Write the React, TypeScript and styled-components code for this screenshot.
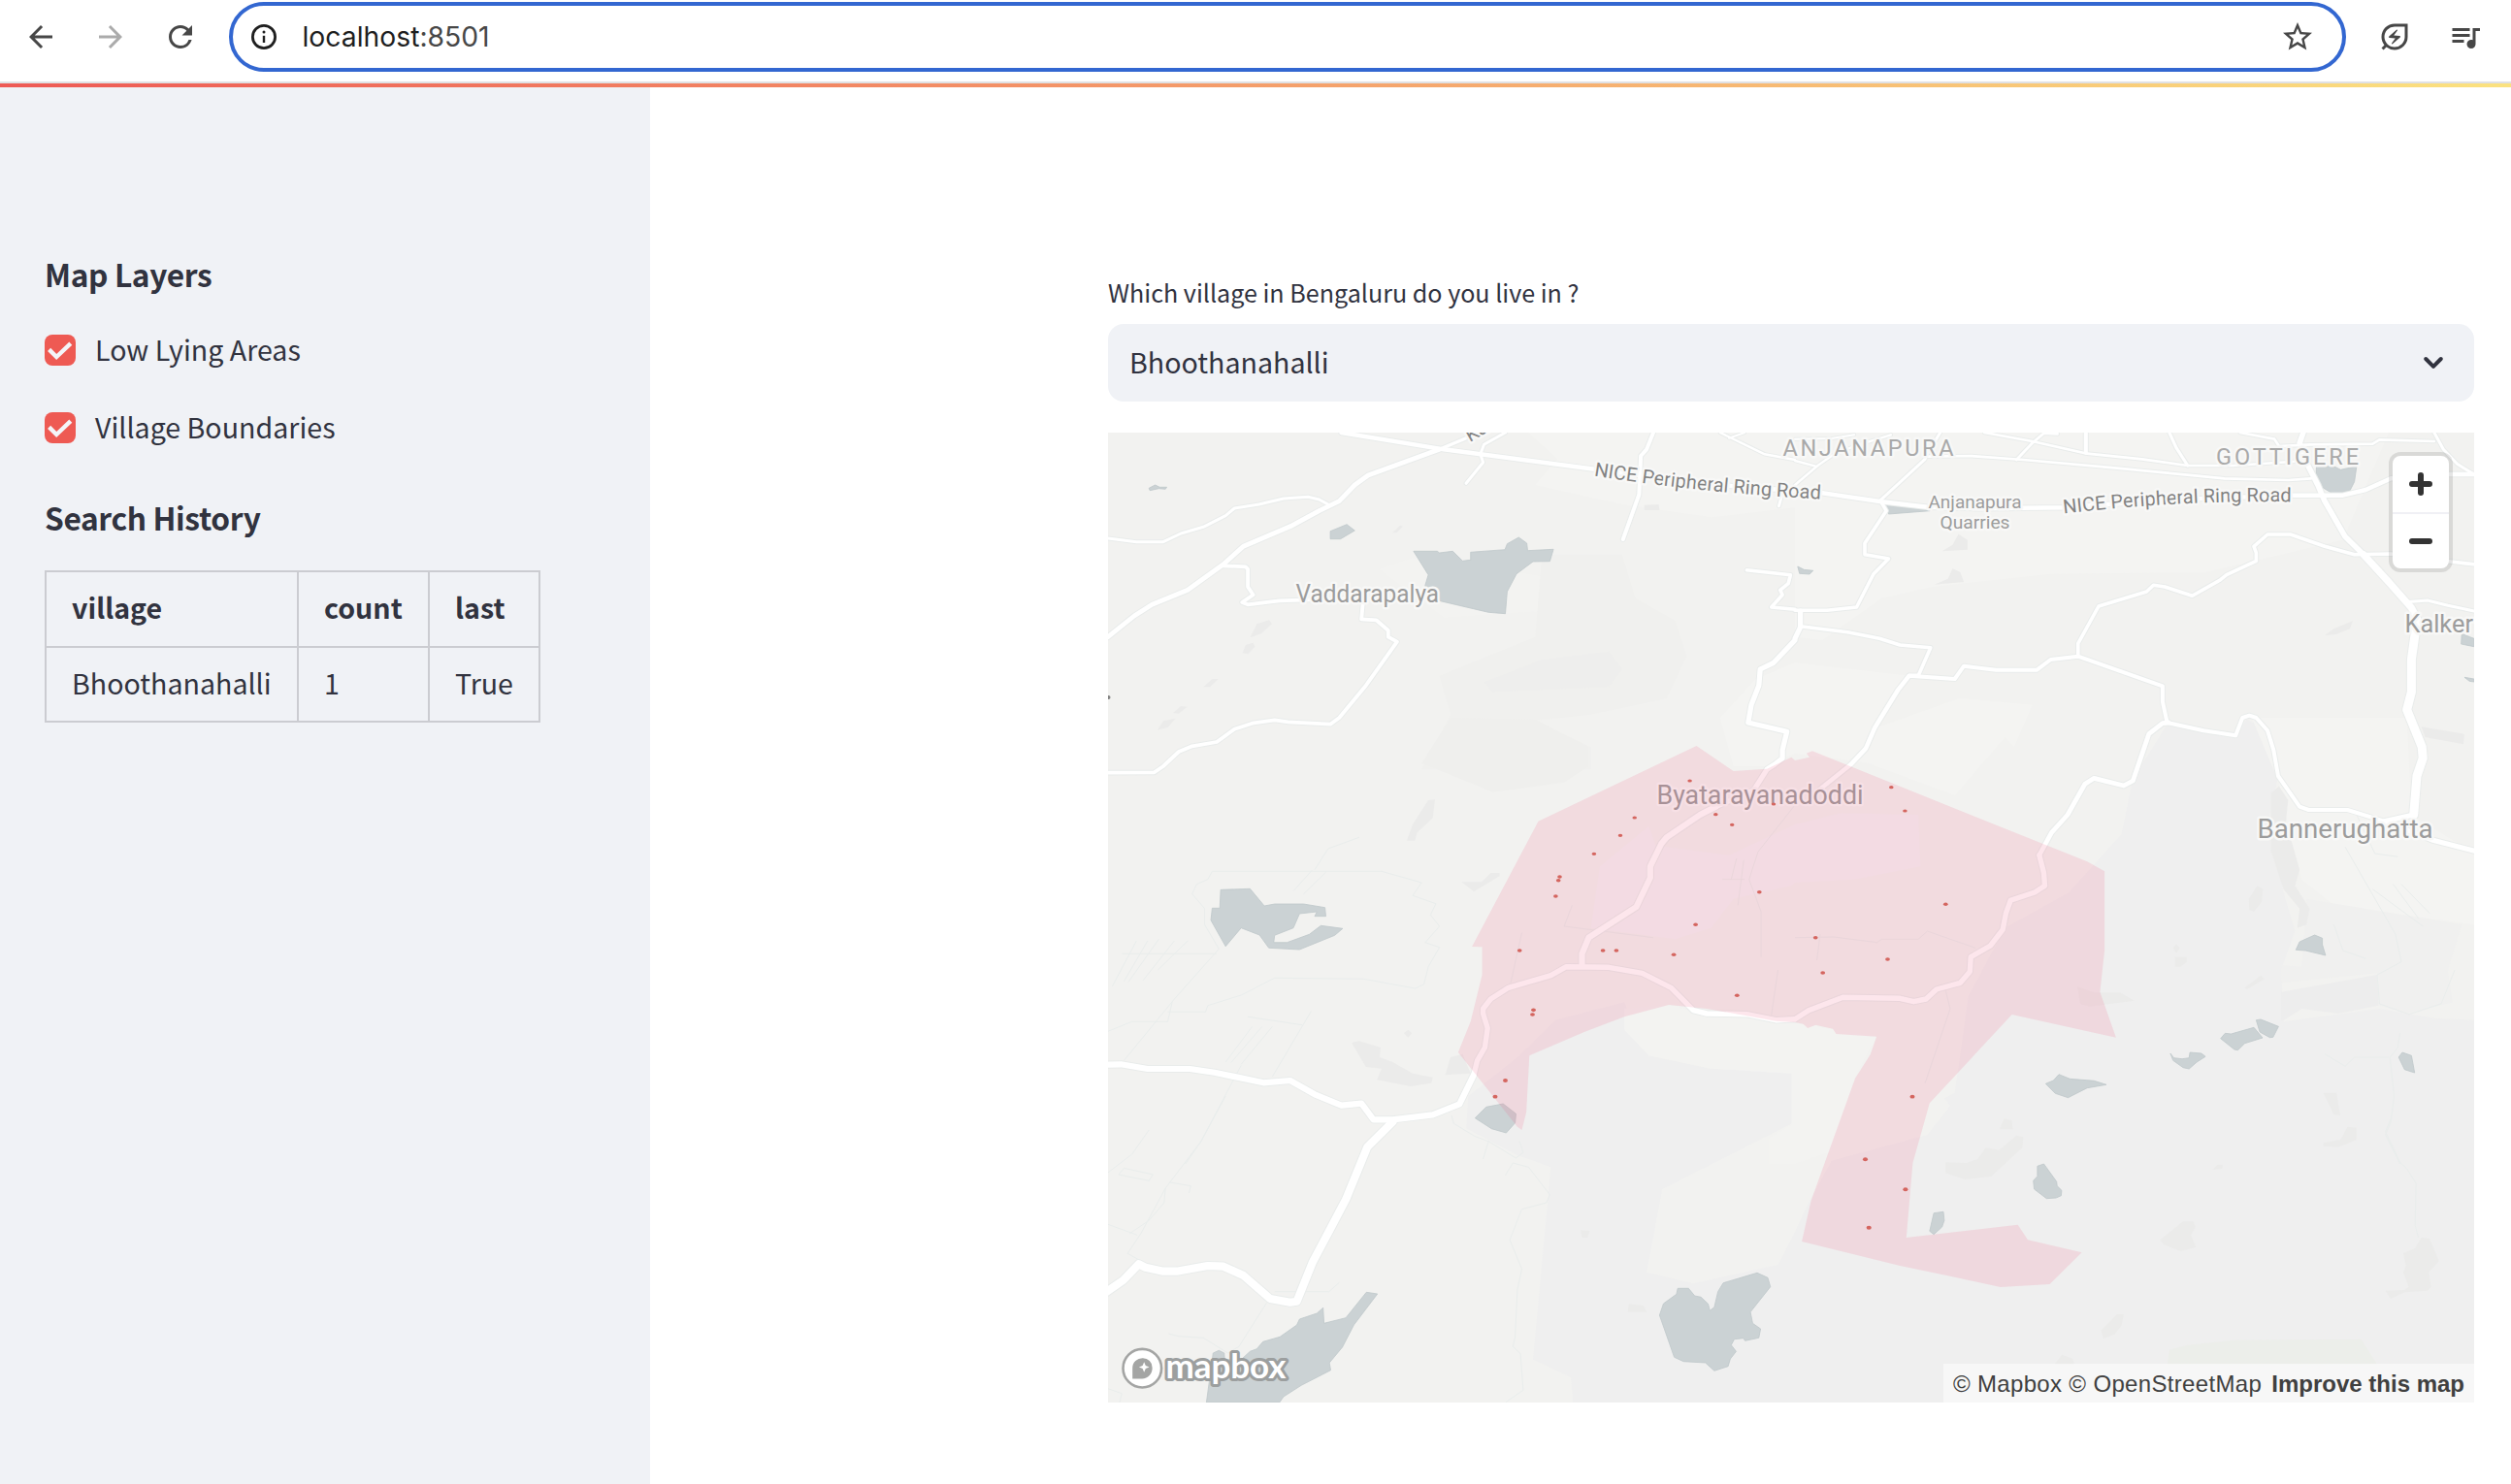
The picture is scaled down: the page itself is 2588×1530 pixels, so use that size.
import React from 'react';
import styled, { createGlobalStyle } from 'styled-components';
import {
  MdArrowBack,
  MdArrowForward,
  MdRefresh,
  MdStarBorder,
  MdOutlineEnergySavingsLeaf,
  MdQueueMusic,
} from 'react-icons/md';

const GlobalStyle = createGlobalStyle`
  *, *::before, *::after { box-sizing: border-box; }
  body {
    margin: 0;
    background: #ffffff;
    color: #31333f;
    font-family: "Noto Sans CJK SC", "Noto Sans", sans-serif;
  }
`;

/* ---------- page shell ---------- */

const Page = styled.div`
  display: flex;
  flex-direction: column;
  width: 2588px;
  height: 1530px;
  overflow: hidden;
`;

const Toolbar = styled.header`
  display: flex;
  align-items: flex-start;
  flex: none;
  height: 86px;
  padding: 2px 0 0 24px;
  border-bottom: 2px solid #e0e1e4;
`;

const NavButton = styled.button<{ $gap?: number; $muted?: boolean }>`
  display: flex;
  align-items: center;
  justify-content: center;
  flex: none;
  width: 36px;
  height: 72px;
  margin: 0 ${(p) => p.$gap ?? 0}px 0 0;
  padding: 0;
  border: 0;
  background: none;
  color: ${(p) => (p.$muted ? '#ababab' : '#474747')};
`;

const AddressBar = styled.div`
  display: flex;
  align-items: center;
  width: 2182px;
  height: 72px;
  margin-right: 32px;
  padding: 0 28px 0 19px;
  border: 4px solid #3367d1;
  border-radius: 36px;
`;

const Address = styled.div`
  flex: 1;
  margin-left: 26.5px;
  color: #1f1f1f;
  font: 400 28.3px/64px Inter, sans-serif;
`;

const Port = styled.span`
  color: #474747;
`;

const Decoration = styled.div`
  flex: none;
  height: 4px;
  background: linear-gradient(90deg, #ee5a55, #fbe280);
`;

const Body = styled.div`
  display: flex;
  flex: 1;
`;

/* ---------- sidebar ---------- */

const Sidebar = styled.aside`
  flex: none;
  width: 670px;
  padding: 170px 46px 0;
  background: #f0f2f6;
`;

const Heading = styled.h3`
  margin: 0;
  font-size: 31.7px;
  font-weight: 700;
  line-height: 44px;
  letter-spacing: -0.37px;
`;

const Options = styled.div`
  display: flex;
  flex-direction: column;
  gap: 48px;
  padding: 41px 0 54px;
`;

const Option = styled.label`
  display: flex;
  align-items: center;
  gap: 20px;
  height: 32px;
  font-size: 28.6px;
`;

const OptionText = styled.span`
  line-height: 32px;
  margin-top: -3px;
`;

const Tick = styled.span`
  display: flex;
  align-items: center;
  justify-content: center;
  width: 32px;
  height: 32px;
  border-radius: 8px;
  background: #ee5a53;
`;

const HistoryTable = styled.table`
  margin-top: 33px;
  border-collapse: collapse;
  font-size: 28.6px;
  line-height: 48px;
  text-align: left;
`;

const Cell = styled.td<{ $width: number }>`
  width: ${(p) => p.$width}px;
  height: 77.5px;
  padding: 0 0 3px 26px;
  border: 2px solid #cbccd1;
`;

/* ---------- main column ---------- */

const Main = styled.main`
  width: 1408px;
  margin-left: 472px;
  padding-top: 192px;
`;

const FieldLabel = styled.div`
  height: 52px;
  font-size: 25.1px;
  line-height: 38px;
`;

const Select = styled.div`
  display: flex;
  align-items: center;
  justify-content: space-between;
  height: 80px;
  padding: 0 30px 0 22px;
  border-radius: 16px;
  background: #f0f2f6;
  font-size: 28.6px;
`;

const SelectValue = styled.span`
  line-height: 48px;
  margin-top: -3px;
`;

const MapFrame = styled.div`
  position: relative;
  height: 1000px;
  margin-top: 32px;
  overflow: hidden;
  background: #f2f2f0;
`;

const ZoomControl = styled.div`
  position: absolute;
  top: 20px;
  right: 22px;
  width: 66px;
  border: 4px solid rgba(0, 0, 0, 0.1);
  border-radius: 12px;
  background: #ffffff;
  background-clip: padding-box;
`;

const ZoomButton = styled.button`
  display: flex;
  align-items: center;
  justify-content: center;
  width: 58px;
  height: 58px;
  padding: 0;
  border: 0;
  background: none;

  & + & {
    border-top: 2px solid #f0f0f5;
  }
`;

const Attribution = styled.div`
  position: absolute;
  right: 0;
  bottom: 0;
  display: flex;
  justify-content: space-between;
  width: 547px;
  height: 40px;
  padding: 1px 10px 0;
  background: rgba(255, 255, 255, 0.5);
  color: #404040;
  font: 24px/40px "Liberation Sans", Arial, sans-serif;
  white-space: nowrap;
`;

const Credits = styled.span`
  letter-spacing: 0.33px;
`;

/* ---------- map geometry ---------- */

/* Shapes are stored per tile; each tile has its own origin and unit size. */
type TileId = 'A' | 'B' | 'C' | 'D' | 'E' | 'F';
type Segment = [TileId, string];

const WEST = 0.45918;
const EAST = 0.47066;
const tiles: Record<TileId, { x: number; y: number; sx: number }> = {
  A: { x: -12, y: -176, sx: WEST },
  B: { x: 708, y: -176, sx: EAST },
  C: { x: -12, y: 294, sx: WEST },
  D: { x: 708, y: 294, sx: EAST },
  E: { x: -12, y: 684, sx: WEST },
  F: { x: 708, y: 684, sx: EAST },
};

const place = (segments: Segment[]) =>
  segments
    .map(([id, list]) => {
      const tile = tiles[id];
      return list
        .split(' ')
        .map((pair) => {
          const [x, y] = pair.split(',').map(Number);
          return `${(tile.x + x * tile.sx).toFixed(1)},${(tile.y + y / 3).toFixed(1)}`;
        })
        .join(' ');
    })
    .join(' ');

const terrain: { fill: string; shape: Segment[] }[] = [
  { fill: '#f4f4f2', shape: [['B', '0,528 1300,528 1200,860 900,960 560,965 300,1005 190,1040 60,1170 0,1160 0,960']] },
  { fill: '#f4f4f2', shape: [['A', '970,528 1568,528 1568,760 1380,790 1180,750 985,690 1035,610']] },
  { fill: '#f3f3f1', shape: [['A', '635,950 710,915 990,970 1030,1000 1000,1080 780,1100']] },
  { fill: '#f0f0ee', shape: [['A', '1000,905 1180,905 1210,1040 1300,1110 1325,1220 1280,1350 1110,1400 980,1420 1110,1500 1110,1570 730,1570 795,1400 770,1280 985,1160']] },
  { fill: '#efefed', shape: [['C', '795,0 985,5 1105,90 1105,150 1050,200 890,230 730,140']] },
  { fill: '#eeeeed', shape: [['A', '870,1300 1000,1230 1150,1205 1180,1260 1150,1315 890,1330']] },
  { fill: '#f4f4f2', shape: [['A', '1480,1290 1568,1240'], ['B', '250,1280 180,1440 360,1350 520,1370 480,1500'], ['D', '460,60 350,240 160,140 0,110'], ['C', '1500,150 1430,150 1400,0']] },
  { fill: '#efefef', shape: [['D', '815,20 960,50 990,5 1035,40 1058,180 1040,300 1070,540 1095,660 1065,780 1070,940 1280,900 1400,930 1487,935'], ['F', '1487,948 0,948'], ['E', '1568,948 1070,948 1065,870 980,815 1020,220 940,180 830,100 835,0'], ['C', '950,1045 1030,935 1185,880 1240,1045 1380,1085 1568,1100'], ['D', '0,1380 100,1340 350,1160 380,860 460,650 600,540 715,360 740,190']] },
  { fill: '#f2f2f0', shape: [['E', '1568,80 1270,288 1235,545 1340,580 1530,522 1568,420'], ['F', '0,420 30,330 80,200 290,120 340,30 290,-60 130,-60']] },
  { fill: '#f3f3f1', shape: [['C', '1185,900 1290,888 1340,910 1568,940'], ['D', '0,945 178,985 130,1115 80,1340 0,1380'], ['C', '1568,1380 1510,1380 1510,1300 1560,1260 1560,1100 1380,1085 1240,1045 1185,965']] },
  { fill: '#f4f3f5', shape: [['C', '1130,460 1240,335 1255,395 1420,425 1568,330'], ['D', '100,295 270,300 275,460 130,500 0,510'], ['C', '1560,520 1430,560 1380,650 1300,685 1110,650']] },
  { fill: '#f4f4f2', shape: [['D', '1000,0 1340,0 1350,300 1487,420 1487,640 1180,580 1110,500 1090,400 1060,200']] },
  { fill: '#ededed', shape: [['D', '1065,848 1275,795 1278,890 1190,915 1110,900 1065,940']] },
  { fill: '#f0f0ef', shape: [['D', '1120,560 1460,640 1430,780 1440,880 1340,915 1280,890 1275,790 1065,820 1065,765 1110,770']] },
  { fill: '#eceeea', shape: [['F', '815,830 820,785 860,770 960,755 1240,752 1275,830']] },
];

const patches: Segment[][] = [
  [['A', '345,1162 360,1120 388,1108 394,1120 370,1150']],
  [['A', '328,1210 335,1185 352,1178 356,1190 340,1213']],
  [['A', '240,1315 260,1290 274,1290 255,1315']],
  [['A', '172,1395 190,1374 204,1376 185,1397']],
  [['A', '137,1448 150,1420 178,1412 160,1440']],
  [['A', '664,838 682,815 688,818 674,838']],
  [['A', '1230,752 1262,750 1264,768 1230,768']],
  [['B', '322,895 345,875 358,842 378,860 378,890']],
  [['B', '305,998 335,980 345,948 362,960 370,990']],
  [['B', '1160,1155 1180,1135 1222,1110 1215,1135 1185,1152']],
  [['B', '1372,1438 1466,1460 1464,1492 1380,1470']],
  [['C', '697,380 710,330 745,255 760,253 755,310 720,355 715,380']],
  [['C', '820,508 865,508 885,480 905,480 905,490 847,538']],
  [['C', '573,1005 590,1000 638,1020 636,1050 665,1065 710,1100 755,1112 752,1130 705,1140 630,1120 640,1085 605,1080']],
  [['C', '690,975 700,965 708,975 700,990']],
  [['C', '783,1105 795,1050 822,1040 840,1100']],
  [['D', '1042,235 1060,212 1080,255 1075,320 1105,470 1095,520 1127,590 1120,640 1100,650 1105,590 1070,530 1042,410']],
  [['D', '994,560 1012,520 1025,530 1022,570 1005,600 995,595']],
  [['D', '828,712 835,700 843,712 835,728']],
  [['D', '832,740 858,740 858,755 845,770 832,770']],
  [['D', '985,835 1020,797 1028,808 990,840']],
  [['D', '618,832 655,850 712,850 743,875 645,893 625,885']],
  [['D', '1157,1160 1186,1160 1194,1230 1180,1228']],
  [['D', '448,1273 458,1240 475,1245 477,1273']],
  [['D', '1157,1315 1195,1305 1210,1265 1230,1268 1230,1305 1190,1328 1157,1325']],
  [['F', '330,205 375,207 400,195 418,160 447,167 485,122 500,127 498,160 430,248 372,258 330,238']],
  [['F', '800,445 850,388 872,388 877,405 867,430 878,467 845,480 808,460']],
  [['F', '915,228 925,212 937,212 935,225']],
  [['F', '1332,487 1358,470 1372,437 1390,442 1410,510 1388,545 1393,590 1385,602 1335,607 1305,627 1293,602 1335,600 1344,590 1332,545 1338,525']],
  [['F', '670,725 705,675 720,675 715,710 700,737 676,750']],
  [['F', '568,830 585,800 608,812 612,830']],
  [['E', '1195,643 1228,648 1235,668 1193,668']],
  [['E', '1087,415 1107,417 1102,438 1090,438']],
];

const lanes: Segment[][] = [
  [['C', '215,545 225,515 250,500 260,475 640,475 730,510 710,550 762,575 750,610 770,645 738,695 770,710 745,770 735,825 715,837 600,808 400,805 325,858 250,890 245,910 160,910']],
  [['C', '215,545 243,590 243,640 275,715 175,870 62,1060']],
  [['C', '57,730 270,730']],
  [['C', '90,690 36,830']],
  [['C', '115,690 62,815']],
  [['C', '140,685 72,817']],
  [['C', '175,690 105,812']],
  [['C', '205,690 138,780']],
  [['C', '350,955 290,1065']],
  [['C', '372,955 302,1067']],
  [['C', '395,955 325,1072']],
  [['C', '482,908 395,1110']],
  [['C', '340,925 462,950']],
  [['C', '484,472 443,535']],
  [['C', '515,478 465,545']],
  [['C', '26,970 80,940 160,940 170,880']],
  [['C', '590,370 520,405 490,470']],
  [['C', '325,1075 235,1310 200,1380']],
  [['C', '955,665 930,820']],
  [['C', '1568,270 1485,415 1465,500 1492,600 1492,740']],
  [['C', '1530,780 1515,920']],
  [['C', '1068,580 1050,645 1250,680']],
  [['C', '1405,500 1455,500']],
  [['C', '1437,435 1425,500']],
  [['C', '1453,440 1440,580']],
  [['D', '330,845 340,900 285,1130']],
  [['D', '0,680 85,678 180,695 190,685 270,685 290,660 395,712']],
  [['D', '55,670 48,750']],
  [['D', '1205,400 1315,670 1328,755 1275,795 1280,885 1345,917 1415,885 1445,780']],
  [['D', '1310,515 1365,620']],
  [['D', '1328,515 1390,605']],
  [['D', '1265,530 1375,645']],
  [['D', '1180,640 1200,720 1250,745']],
  [['D', '1230,300 1270,420 1320,430']],
  [['D', '1325,975 1320,1020 1303,1050 1312,1170 1305,1250 1293,1290 1325,1380']],
  [['F', '1305,70 1293,110 1325,205 1340,225 1360,270 1358,400 1365,437']],
  [['D', '1160,1040 1205,1078 1225,1050 1300,1050']],
  [['E', '290,0 235,140 155,285 100,425 70,487 100,510']],
  [['E', '118,105 80,180 26,237']],
  [['E', '155,285 152,330 118,385 75,425']],
  [['E', '26,397 92,430']],
  [['E', '50,243 62,223 127,243 118,262 50,243']],
  [['E', '165,267 212,278 208,300']],
  [['E', '545,577 522,605 400,605']],
  [['E', '382,640 320,775 295,795 240,748 185,743 162,735']],
  [['E', '797,60 802,85 850,125 880,140 942,192 958,175 950,140']],
  [['E', '880,140 868,195']],
  [['E', '918,245 935,207 970,220 1018,305 1010,330 955,350 928,445 955,535 945,600 940,745 935,775 952,797 958,910 918,948']],
  [['E', '26,905 57,920 52,948']],
];

const roads: { width: number; line: Segment[] }[] = [
  { width: 2.4, line: [['A', '1400,528 1500,595 1568,612'], ['B', '0,615 45,632']] },
  { width: 2, line: [['A', '1420,545 1455,528']] },
  { width: 2.4, line: [['B', '0,690 50,630 80,600 130,570 210,535']] },
  { width: 2, line: [['B', '0,548 80,546 130,535']] },
  { width: 3, line: [['B', '185,740 285,610 287,600 318,528']] },
  { width: 2.7, line: [['B', '287,602 385,600 500,612 700,637 940,670 1080,675 1130,670']] },
  { width: 2.7, line: [['B', '415,528 520,555 640,593 760,610 860,630 960,630 1120,615']] },
  { width: 2.8, line: [['B', '485,612 520,560 545,530 575,532']] },
  { width: 4, line: [['B', '637,528 637,590']] },
  { width: 3.2, line: [['B', '820,528 835,575 860,630']] },
  { width: 2.7, line: [['B', '975,528 1050,548 1060,570 1130,565 1265,563 1280,550 1400,555']] },
  { width: 3, line: [['B', '1400,528 1420,580 1450,625 1487,657']] },
  { width: 3, line: [['A', '918,528 870,565 862,595 868,620 830,685']] },
  { width: 3.4, line: [['A', '830,545 770,580']] },
  { width: 4, line: [['A', '1250,528 1235,580 1222,600 1218,720 1182,858']] },
  { width: 3, line: [['A', '1540,715 1532,755']] },
  { width: 3, line: [['A', '26,855 90,866 150,866 190,840 240,820 290,785 310,762 365,750 420,732 475,727 500,735 520,750']] },
  { width: 3.8, line: [['A', '285,940 335,943 340,950 340,1005 352,1030 327,1053 340,1060 410,1048 598,1040 598,1060 595,1105 628,1108 655,1140 655,1160 675,1175 605,1310 545,1410 525,1430 430,1423 400,1417 350,1427 310,1445 270,1485 215,1498 185,1515 150,1560'], ['C', '130,169 26,170']] },
  { width: 4.8, line: [['A', '770,580 610,660 580,690 545,740 500,770 440,815 330,880 285,935 205,1015 125,1060 85,1095 26,1160']] },
  { width: 4.4, line: [['A', '550,528 780,580 1110,640 1350,685'], ['B', '60,715 190,742 290,758 400,763 590,760 830,735 1090,722 1200,722 1250,705 1305,670 1400,657 1487,657']] },
  { width: 3.6, line: [['A', '1460,953 1558,968 1553,995 1535,1015 1540,1030 1515,1068 1568,1075'], ['B', '0,1078 70,1078 135,1068 172,965 205,918 153,905 153,870 200,770 190,745']] },
  { width: 5.2, line: [['B', '12,1080 12,1130 0,1165'], ['A', '1568,1170 1520,1240 1490,1260 1487,1310 1470,1370 1463,1425 1550,1453 1540,1510 1540,1535 1522,1555'], ['C', '1505,160 1475,225 1390,275']] },
  { width: 6.2, line: [['C', '1390,275 1355,300 1280,370 1268,390 1243,460 1243,495 1212,585 1105,680 1090,730 1090,768']] },
  { width: 3.6, line: [['B', '12,1127 115,1145 185,1165 230,1185 297,1193 270,1280']] },
  { width: 3.6, line: [['B', '620,1215 620,1180 665,1065 770,1020 785,1000 810,1005 870,1033 930,985 945,968 1010,925 1010,900 1005,880 1035,843 1085,843 1160,880 1225,905 1305,903 1440,928 1487,935']] },
  { width: 4, line: [['B', '250,1280 350,1290 370,1250 440,1262 530,1262 560,1230 620,1220 805,1312 805,1360 815,1425 895,1450 965,1465 980,1410 995,1403 1010,1410 1035,1450 1048,1510'], ['D', '1058,180 1105,275 1125,285 1210,285 1290,320']] },
  { width: 4.6, line: [['B', '270,1280 250,1280 225,1325 175,1440 155,1505 122,1555'], ['D', '60,215 40,240']] },
  { width: 3, line: [['B', '1335,1052 1385,1047 1430,1063 1487,1080']] },
  { width: 4.8, line: [['D', '818,15 805,17 775,50 740,195 720,210 655,187 635,205 597,300 562,355 535,425']] },
  { width: 5.4, line: [['D', '535,425 545,480 547,520 525,540 472,565 462,605 455,655 428,705 385,740 383,785 362,820 310,840 287,870 260,878 230,868 105,865 30,905 0,932']] },
  { width: 5.4, line: [['D', '0,932'], ['C', '1525,935 1460,917 1370,915 1340,905 1290,835 1225,790 1150,772 1055,770 1020,797 925,835 885,870 868,900 868,915 878,960 872,1020 855,1060 847,1105']] },
  { width: 6.2, line: [['C', '847,1105 815,1195 755,1228 665,1243 622,1243 595,1193 550,1199 490,1165 435,1122 375,1129 265,1097 210,1086 115,1086 55,1072 20,1073']] },
  { width: 5.6, line: [['B', '1115,520 1105,560 1120,620 1145,690 1160,740 1205,850 1245,905']] },
  { width: 7.2, line: [['B', '1245,905 1300,990 1350,1070 1365,1110']] },
  { width: 9, line: [['B', '1362,1110 1350,1230 1350,1330 1340,1385'], ['D', '1373,90 1375,125 1362,180 1355,300']] },
  { width: 5, line: [['D', '1355,300 1290,320 1395,378 1492,413']] },
  { width: 8.2, line: [['E', '665,80 608,158 560,320 485,515 450,635 435,638 390,627 330,555 285,527 250,525 180,542 150,542 110,530 95,520 60,570 20,608']] },
];

const lakes: Segment[][] = [
  [['A', '118,700 132,690 142,697 158,697 155,703 140,701 120,707']],
  [['A', '525,833 562,812 580,831 548,857 525,857']],
  [['A', '712,895 765,895 770,900 800,895 822,925 840,922 840,898 917,890 922,872 948,852 966,870 968,893 1026,889 1018,926 980,927 943,965 922,1020 918,1088 880,1084 738,1038 738,1000 745,968']],
  [['B', '190,745 298,765 295,770 205,780 202,765']],
  [['B', '6,942 20,952 40,955 32,966 10,964']],
  [['B', '1142,632 1180,632 1195,643 1230,632 1225,680 1212,717 1178,717 1140,685']],
  [['B', '1460,1150 1478,1160 1487,1165 1487,1190 1459,1182']],
  [['B', '1466,1285 1487,1290 1487,1299 1477,1297']],
  [['C', '279,532 345,529 377,582 400,576 465,576 513,587 515,614 490,614 495,600 456,606 442,650 400,673 398,695 428,695 478,670 504,643 553,652 535,673 456,717 387,712 366,672 325,650 290,707 257,626 260,589 277,589']],
  [['C', '850,1238 875,1204 913,1194 942,1225 940,1253 920,1284 887,1271']],
  [['D', '1097,718 1105,693 1138,672 1155,682 1155,702 1162,735 1118,720']],
  [['D', '932,992 942,976 955,978 1005,958 1024,990 985,1007 970,1028 962,1026']],
  [['D', '1010,935 1020,933 1059,955 1047,988 1040,989 1018,972']],
  [['D', '822,1038 830,1052 848,1055 863,1052 865,1035 890,1038 899,1048 880,1065 863,1086 850,1082 828,1060']],
  [['D', '549,1132 566,1122 578,1103 602,1117 655,1123 682,1135 640,1145 598,1175 570,1162']],
  [['D', '1322,1050 1330,1035 1350,1045 1357,1098 1335,1088']],
  [['F', '531,217 545,210 573,265 574,278 584,292 583,308 572,315 551,317 524,288 522,262 531,248']],
  [['F', '304,362 325,358 327,385 322,405 304,428 295,418']],
  [['E', '1305,595 1329,595 1343,618 1357,622 1373,643 1377,664 1387,653 1395,605 1407,578 1483,547 1507,562 1513,590 1468,668 1473,703 1491,720 1487,748 1456,757 1452,749 1432,752 1425,770 1436,790 1423,813 1418,836 1387,850 1367,825 1318,821 1297,808 1264,678 1273,642 1302,613']],
  [['E', '606,607 631,612 578,708 552,777 523,825 526,848 460,895 420,930 411,948 247,948 262,795 275,787 287,795 288,815 325,815 345,790 360,782 374,760 412,745 450,708 456,690 495,672 509,655 511,703 560,686']],
];

const village: Segment[] = [
  ['C', '1347,87 1430,165 1505,158 1560,122'],
  ['D', '0,132 32,122 25,110 38,103 380,298 640,445 678,475 678,720 668,848 703,989 475,918 295,1192'],
  ['F', '258,207 244,438 488,398 510,445 628,484 558,582 450,591 350,560 230,525 15,450 35,325 118,0'],
  ['D', '132,1115 165,1042 179,986 90,978 83,962 45,950 28,960 18,947 0,942'],
  ['C', '1525,938 1460,922 1370,900 1285,888 1185,925 1095,972 972,1045 965,1220 955,1275 945,1265 812,1035 840,940 866,795 866,709 843,708 992,320'],
];

const floodSpots: Segment[] = [
  ['C', '1332,195 1208,309 1176,364 1117,421 1040,492 1037,503 1031,552 950,720 1137,720 1167,720 1345,640 1296,733 1488,539 1438,859 981,904 979,918 918,1122 895,1172 1390,299 1427,331 1520,267'],
  ['D', '211,215 241,288 330,577 45,680 61,789 203,747 257,1172'],
  ['F', '154,196 242,289 162,407'],
];

/* ---------- map rendering ---------- */

const MapCanvas = styled.svg`
  display: block;
  width: 1408px;
  height: 1000px;
`;

const MapLabel = styled.text<{ $tone?: string }>`
  fill: ${(p) => p.$tone ?? '#9c9c9c'};
  stroke: #f8f8f7;
  stroke-width: 5px;
  stroke-linejoin: round;
  paint-order: stroke;
  font-family: Roboto, sans-serif;
`;

const Wordmark = styled.text`
  fill: #ffffff;
  stroke: #9c9f9f;
  stroke-width: 6px;
  stroke-linejoin: round;
  paint-order: stroke;
  font: 700 34px Lato, sans-serif;
`;

const placeNames = [
  { text: 'ANJANAPURA', x: 695.5, y: 24, width: 176, size: 23.5, spaced: true },
  { text: 'GOTTIGERE', x: 1142, y: 33, width: 147, size: 23.5, spaced: true },
  { text: 'Vaddarapalya', x: 193.5, y: 175, width: 147.5, size: 25 },
  { text: 'Anjanapura', x: 845.5, y: 77.5, width: 96, size: 19 },
  { text: 'Quarries', x: 857.5, y: 98.5, width: 72, size: 19 },
  { text: 'Kalker', x: 1336.5, y: 206, width: 70.5, size: 25 },
  { text: 'Bannerughatta', x: 1184.5, y: 417.5, width: 181, size: 27.5 },
  { text: 'Byatarayanadoddi', x: 565.5, y: 383, width: 213, size: 27.5 },
];

function VillageMap() {
  return (
    <MapCanvas viewBox="0 0 1408 1000" role="img" aria-label="Village map">
      {terrain.map((area, i) => (
        <polygon key={i} points={place(area.shape)} fill={area.fill} />
      ))}
      {patches.map((shape, i) => (
        <polygon key={i} points={place(shape)} fill="#ebebea" />
      ))}
      <g fill="none" stroke="#e9edec" strokeWidth="1">
        {lanes.map((line, i) => (
          <polyline key={i} points={place(line)} />
        ))}
      </g>
      <g fill="#cbd2d4" stroke="#bfc8ca" strokeWidth="0.8">
        {lakes.map((shape, i) => (
          <polygon key={i} points={place(shape)} />
        ))}
      </g>
      <g fill="none" stroke="#e9eceb" strokeLinejoin="round" strokeLinecap="round">
        {roads.map((road, i) => (
          <polyline key={i} points={place(road.line)} strokeWidth={road.width + 2} />
        ))}
      </g>
      <g fill="none" stroke="#ffffff" strokeLinejoin="round" strokeLinecap="round">
        {roads.map((road, i) => (
          <polyline key={i} points={place(road.line)} strokeWidth={road.width} />
        ))}
      </g>

      {placeNames.map((name) => (
        <MapLabel
          key={name.text}
          x={name.x}
          y={name.y}
          fontSize={name.size}
          textLength={name.width}
          lengthAdjust={name.spaced ? 'spacing' : 'spacingAndGlyphs'}
          $tone={name.spaced ? '#a9a9a9' : undefined}
        >
          {name.text}
        </MapLabel>
      ))}
      <path id="ring-west" d="M501,44.5 Q610,62 742,69" fill="none" />
      <path id="ring-east" d="M985,83.5 Q1110,69 1228,71.5" fill="none" />
      <MapLabel fontSize="20" $tone="#828282">
        <textPath href="#ring-west" textLength="235" lengthAdjust="spacingAndGlyphs">NICE Peripheral Ring Road</textPath>
      </MapLabel>
      <MapLabel fontSize="20" $tone="#828282">
        <textPath href="#ring-east" textLength="235" lengthAdjust="spacingAndGlyphs">NICE Peripheral Ring Road</textPath>
      </MapLabel>
      <MapLabel fontSize="20" $tone="#828282" transform="translate(373 10) rotate(-30)">Ka</MapLabel>
      <circle cx="0.5" cy="273" r="2" fill="#828282" />

      <polygon points={place(village)} fill="rgba(242, 90, 125, 0.15)" />
      {place(floodSpots).split(' ').map((spot) => {
        const [x, y] = spot.split(',').map(Number);
        return <ellipse key={spot} cx={x} cy={y} rx={2 + y / 1400} ry={1.2 + y / 950} fill="#d4655f" />;
      })}

      <circle cx="35.3" cy="964.7" r="19.8" fill="#ffffff" stroke="#a4a5a4" strokeWidth="2.6" />
      <path d="M25.2,975.5 V964.4 A10.2,10.2 0 0 1 35.9,954.2 A9.6,9.6 0 0 1 45.6,964 A10.8,10.8 0 0 1 35,975.5 Z" fill="#a4a5a4" />
      <path d="M37.2,958.2 L38.8,961.9 L42.5,963.5 L38.8,965.1 L37.2,968.8 L35.6,965.1 L31.9,963.5 L35.6,961.9 Z" fill="#ffffff" />
      <Wordmark x="59.5" y="974.5" textLength="124" lengthAdjust="spacingAndGlyphs">mapbox</Wordmark>
    </MapCanvas>
  );
}

function InfoIcon() {
  return (
    <svg width="26" height="26" viewBox="0 0 26 26" fill="none" stroke="#1f1f1f">
      <circle cx="13" cy="13" r="11.6" strokeWidth="2.8" />
      <path d="M13 11.8V19" strokeWidth="2.4" />
      <circle cx="13" cy="8" r="1.5" fill="#1f1f1f" stroke="none" />
    </svg>
  );
}

function Checkbox({ label }: { label: string }) {
  return (
    <Option>
      <Tick>
        <svg width="32" height="32" viewBox="0 0 32 32" fill="none" stroke="#f4f5f8" strokeWidth="4.4">
          <path d="M4.6 15.4L12.2 23L26.8 9.2" />
        </svg>
      </Tick>
      <OptionText>{label}</OptionText>
    </Option>
  );
}

export default function App() {
  return (
    <Page>
      <GlobalStyle />
      <Toolbar>
        <NavButton $gap={36} aria-label="Back"><MdArrowBack size={36} /></NavButton>
        <NavButton $gap={36} $muted aria-label="Forward"><MdArrowForward size={36} /></NavButton>
        <NavButton $gap={32} aria-label="Reload"><MdRefresh size={36} /></NavButton>
        <AddressBar>
          <InfoIcon />
          <Address>localhost<Port>:8501</Port></Address>
          <MdStarBorder size={36} color="#474747" />
        </AddressBar>
        <NavButton $gap={37} aria-label="Energy saver"><MdOutlineEnergySavingsLeaf size={38} /></NavButton>
        <NavButton aria-label="Media"><MdQueueMusic size={38} /></NavButton>
      </Toolbar>
      <Decoration />
      <Body>
        <Sidebar>
          <Heading>Map Layers</Heading>
          <Options>
            <Checkbox label="Low Lying Areas" />
            <Checkbox label="Village Boundaries" />
          </Options>
          <Heading>Search History</Heading>
          <HistoryTable>
            <thead>
              <tr>
                <Cell as="th" $width={260}>village</Cell>
                <Cell as="th" $width={135}>count</Cell>
                <Cell as="th" $width={114}>last</Cell>
              </tr>
            </thead>
            <tbody>
              <tr>
                <Cell $width={260}>Bhoothanahalli</Cell>
                <Cell $width={135}>1</Cell>
                <Cell $width={114}>True</Cell>
              </tr>
            </tbody>
          </HistoryTable>
        </Sidebar>
        <Main>
          <FieldLabel>Which village in Bengaluru do you live in ?</FieldLabel>
          <Select>
            <SelectValue>Bhoothanahalli</SelectValue>
            <svg width="24" height="18" viewBox="0 0 24 18" fill="none" stroke="#31333f" strokeWidth="4" strokeLinecap="round" strokeLinejoin="round">
              <path d="M4.2 5L12 12.8L19.8 5" />
            </svg>
          </Select>
          <MapFrame>
            <VillageMap />
            <ZoomControl>
              <ZoomButton aria-label="Zoom in">
                <svg width="24" height="24" viewBox="0 0 24 24" stroke="#333" strokeWidth="6" strokeLinecap="round">
                  <path d="M3 12H21M12 3V21" />
                </svg>
              </ZoomButton>
              <ZoomButton aria-label="Zoom out">
                <svg width="24" height="24" viewBox="0 0 24 24" stroke="#333" strokeWidth="6" strokeLinecap="round">
                  <path d="M3 12H21" />
                </svg>
              </ZoomButton>
            </ZoomControl>
            <Attribution>
              <Credits>© Mapbox © OpenStreetMap</Credits>
              <b>Improve this map</b>
            </Attribution>
          </MapFrame>
        </Main>
      </Body>
    </Page>
  );
}
